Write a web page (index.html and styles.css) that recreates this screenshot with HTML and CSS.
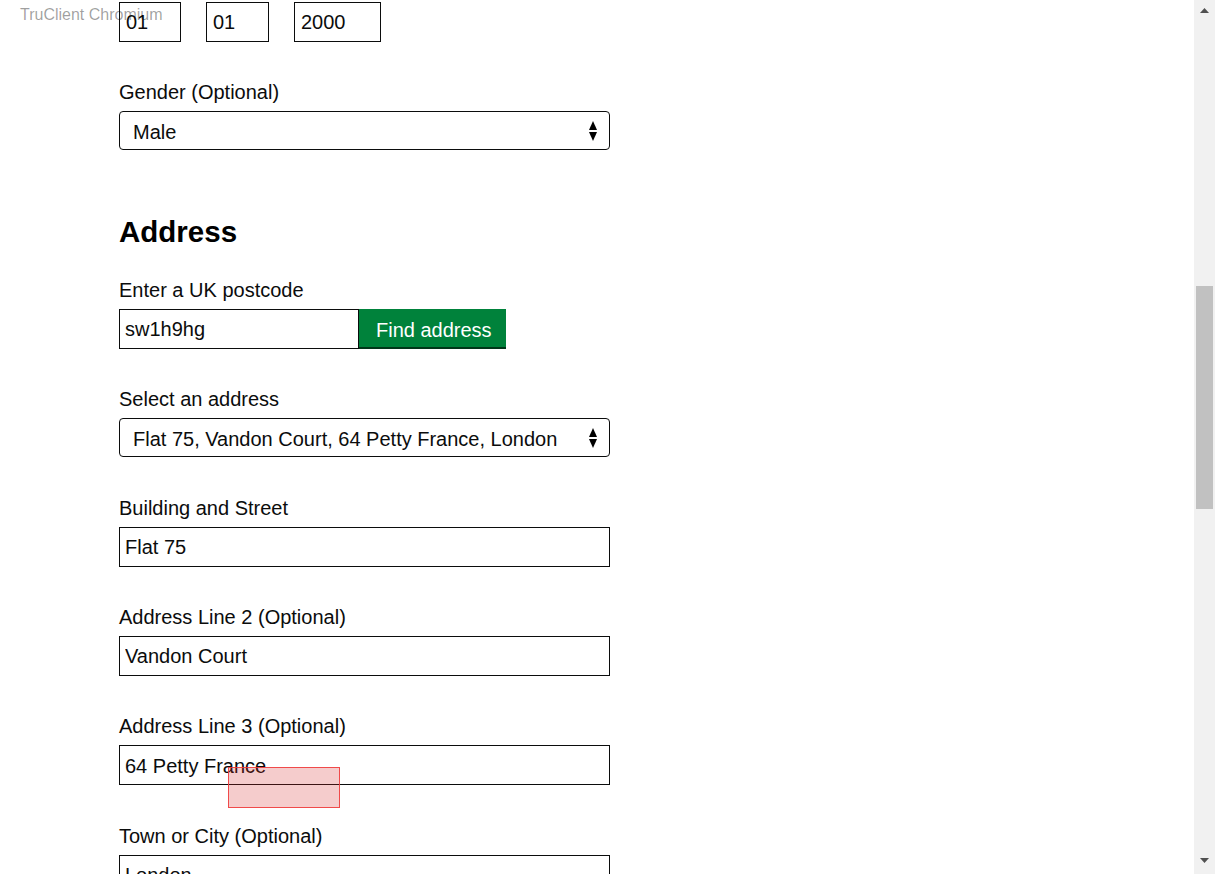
FILE: index.html
```html
<!DOCTYPE html>
<html lang="en">
<head>
<meta charset="utf-8">
<title>Address</title>
<link rel="stylesheet" href="styles.css">
</head>
<body>
<div class="viewport">
  <main class="page">
    <div class="date-row">
      <input class="text-input date-day" type="text" value="01">
      <input class="text-input date-month" type="text" value="01">
      <input class="text-input date-year" type="text" value="2000">
    </div>

    <div class="form-group">
      <label class="label">Gender (Optional)</label>
      <div class="select">
        <span class="select-value">Male</span>
        <svg class="select-arrow" width="8" height="20" viewBox="0 0 8 20"><polygon points="4,0 8,9 0,9" fill="#000"/><polygon points="0,11 8,11 4,20" fill="#000"/></svg>
      </div>
    </div>

    <h2 class="heading">Address</h2>

    <div class="form-group">
      <label class="label">Enter a UK postcode</label>
      <div class="postcode-row">
        <input class="text-input postcode-input" type="text" value="sw1h9hg">
        <button class="button" type="button">Find address</button>
      </div>
    </div>

    <div class="form-group">
      <label class="label">Select an address</label>
      <div class="select">
        <span class="select-value">Flat 75, Vandon Court, 64 Petty France, London</span>
        <svg class="select-arrow" width="8" height="20" viewBox="0 0 8 20"><polygon points="4,0 8,9 0,9" fill="#000"/><polygon points="0,11 8,11 4,20" fill="#000"/></svg>
      </div>
    </div>

    <div class="form-group">
      <label class="label">Building and Street</label>
      <input class="text-input wide-input" type="text" value="Flat 75">
    </div>

    <div class="form-group">
      <label class="label">Address Line 2 (Optional)</label>
      <input class="text-input wide-input" type="text" value="Vandon Court">
    </div>

    <div class="form-group">
      <label class="label">Address Line 3 (Optional)</label>
      <input class="text-input wide-input" type="text" value="64 Petty France">
    </div>

    <div class="form-group">
      <label class="label">Town or City (Optional)</label>
      <input class="text-input wide-input" type="text" value="London">
    </div>

    <div class="overlay-title">TruClient Chromium</div>
    <div class="highlight"></div>
  </main>

  <aside class="scrollbar">
    <div class="sb-button sb-up">
      <svg width="9" height="5" viewBox="0 0 9 5"><polygon points="0,5 4.5,0 9,5" fill="#505050"/></svg>
    </div>
    <div class="sb-thumb"></div>
    <div class="sb-spacer"></div>
    <div class="sb-button sb-down">
      <svg width="9" height="5" viewBox="0 0 9 5"><polygon points="0,0 9,0 4.5,5" fill="#505050"/></svg>
    </div>
  </aside>
</div>
</body>
</html>
```

FILE: styles.css
```css
html, body {
  margin: 0;
  padding: 0;
  background: #ffffff;
}

body {
  font-family: "Liberation Sans", Arial, sans-serif;
  color: #0b0c0c;
}

.viewport {
  display: flex;
  height: 874px;
  overflow: hidden;
}

.page {
  flex: 1;
  position: relative;
  padding: 2px 0 0 119px;
  overflow: hidden;
}

.date-row {
  display: flex;
  gap: 25px;
  margin-bottom: 38px;
}

.text-input {
  box-sizing: border-box;
  height: 40px;
  border: 1px solid #0b0c0c;
  border-radius: 0;
  padding: 2px 5px 0;
  margin: 0;
  font-family: "Liberation Sans", Arial, sans-serif;
  font-size: 20px;
  color: #0b0c0c;
  background: #fff;
  outline: none;
}

.date-day,
.date-month,
.date-year {
  padding: 0 0 0 6px;
}

.date-day { width: 62px; }
.date-month { width: 63px; }
.date-year { width: 87px; }

.wide-input { display: block; width: 491px; }

.form-group {
  margin-bottom: 38.4px;
}

.label {
  display: block;
  font-size: 20px;
  line-height: 25px;
  margin-bottom: 6px;
}

.select {
  box-sizing: border-box;
  width: 491px;
  height: 39px;
  border: 1px solid #0b0c0c;
  border-radius: 4px;
  display: flex;
  align-items: center;
  justify-content: space-between;
  padding: 3px 12px 0 13px;
  font-size: 20px;
  background: #fff;
}

.select-arrow {
  display: block;
  flex: none;
  margin-top: -3px;
}

.heading {
  font-size: 29.5px;
  line-height: 35px;
  font-weight: 700;
  margin: 64px 0 28.8px;
  color: #000;
}

.postcode-row {
  display: flex;
  align-items: flex-start;
}

.postcode-input {
  width: 240px;
}

.button {
  box-sizing: border-box;
  width: 147px;
  height: 38px;
  border: 0;
  margin: 0;
  padding: 5px 0 0 17px;
  text-align: left;
  background: #00823b;
  box-shadow: 0 2px 0 #003618;
  color: #ffffff;
  font-family: "Liberation Sans", Arial, sans-serif;
  font-size: 20px;
  line-height: 33px;
  cursor: pointer;
}

.overlay-title {
  position: absolute;
  left: 20px;
  top: 6px;
  font-size: 16px;
  line-height: 18px;
  color: rgba(0, 0, 0, 0.38);
  z-index: 5;
}

.highlight {
  position: absolute;
  left: 228px;
  top: 767px;
  width: 110px;
  height: 39px;
  border: 1px solid rgba(240, 60, 60, 0.9);
  background: rgba(215, 40, 40, 0.24);
  z-index: 5;
}

.scrollbar {
  flex: none;
  width: 21px;
  height: 874px;
  background: #f1f1f1;
  display: flex;
  flex-direction: column;
  align-items: center;
}

.sb-button {
  height: 21px;
  width: 21px;
  display: flex;
  align-items: center;
  justify-content: center;
  flex: none;
}

.sb-down {
  align-items: flex-start;
  padding-top: 5px;
  box-sizing: border-box;
}

.sb-thumb {
  flex: none;
  width: 17px;
  height: 223px;
  margin-top: 265px;
  background: #c1c1c1;
}

.sb-spacer {
  flex: 1;
}
```
